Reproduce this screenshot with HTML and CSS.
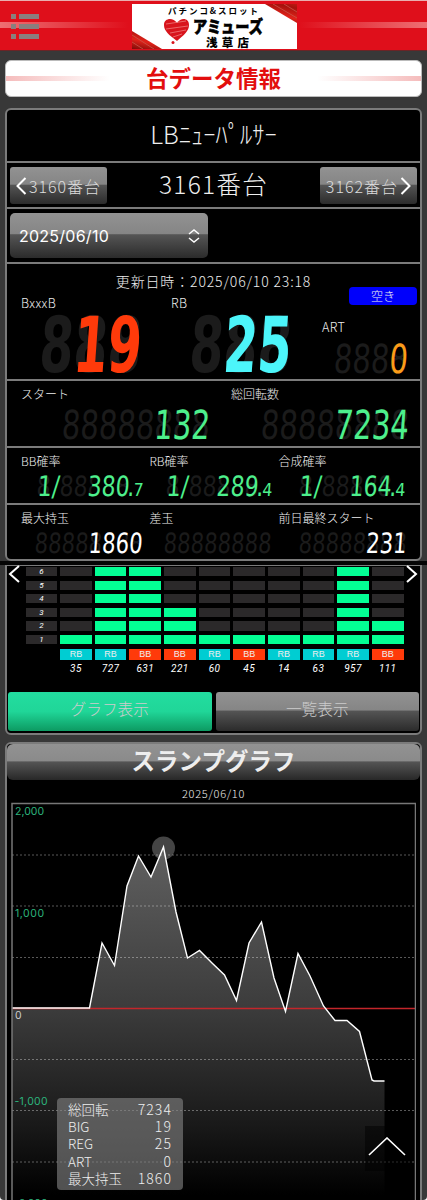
FILE: index.html
```html
<!DOCTYPE html>
<html lang="ja">
<head>
  <meta charset="UTF-8">
  <meta name="viewport" content="width=device-width, initial-scale=1.0">
  <title>台データ情報</title>
  <link rel="stylesheet" href="styles.css">
</head>
<body>
<div class="page">
  <header class="header">
    <div class="menu"><i></i><i></i><i></i></div>
    <svg class="logo" width="165" height="45" viewBox="0 0 165 45">
      <defs>
        <linearGradient id="ribbon" x1="0" y1="1" x2="0.35" y2="0" spreadMethod="reflect">
          <stop offset="0" stop-color="#7d0c08"/>
          <stop offset="0.5" stop-color="#e2231a"/>
          <stop offset="1" stop-color="#a5120c"/>
        </linearGradient>
      </defs>
      <rect width="165" height="45" fill="#fff"/>
      <path d="M0 27L30 45H0Z" fill="url(#ribbon)"/>
      <path d="M0 31L22 45M0 38L11 45" stroke="#c9574a" stroke-width="0.8"/>
      <path d="M133 0H165V19Z" fill="url(#ribbon)"/>
      <path d="M141 0L165 14M152 0L165 8" stroke="#c9574a" stroke-width="0.8"/>
      <path d="M45 37C37 31 32 27 32 21C32 14 41 13 45 19C49 13 57 14 57 21C57 27 52 31 45 37Z" fill="#d8141c"/>
      <path d="M34 20L54 17M34 25L56 22M38 29L54 26M41 33L50 30" stroke="#ef7b7b" stroke-width="0.8"/>
      <circle cx="41" cy="38.500" r="1.500" fill="#d8141c"/>
      <text class="logo-sub" x="36" y="9.500" textLength="90">パチンコ&amp;スロット</text>
      <text class="logo-name" x="61" y="29" textLength="70" lengthAdjust="spacingAndGlyphs">アミューズ</text>
      <text class="logo-shop" x="74" y="42.500" textLength="43">浅草店</text>
    </svg>
  </header>

  <h1 class="page-title">台データ情報</h1>

  <section class="panel machine">
    <h2 class="machine-name">LBﾆｭｰﾊﾟﾙｻｰ</h2>
    <div class="machine-nav">
      <a class="btn"><svg width="11" height="18" viewBox="0 0 11 18"><path d="M9.500 1L1.500 9L9.500 17"/></svg>3160番台</a>
      <strong>3161番台</strong>
      <a class="btn">3162番台<svg width="11" height="18" viewBox="0 0 11 18"><path d="M1.500 1L9.500 9L1.500 17"/></svg></a>
    </div>
    <div class="date-row">
      <div class="select">2025/06/10<svg width="12" height="14" viewBox="0 0 12 14"><path d="M1 5L6 1L11 5M1 9L6 13L11 9"/></svg></div>
    </div>

    <div class="counts">
      <p class="updated">更新日時：2025/06/10 23:18</p>
      <span class="badge">空き</span>
      <div class="count">
        <label>BxxxB</label>
        <svg class="led big" width="102" height="58"><text class="ghost" x="0" y="57" textLength="102" lengthAdjust="spacingAndGlyphs">888</text><text class="red" x="34" y="57" textLength="68" lengthAdjust="spacingAndGlyphs">19</text></svg>
      </div>
      <div class="count">
        <label>RB</label>
        <svg class="led big" width="102" height="58"><text class="ghost" x="0" y="57" textLength="102" lengthAdjust="spacingAndGlyphs">888</text><text class="cyan" x="34" y="57" textLength="68" lengthAdjust="spacingAndGlyphs">25</text></svg>
      </div>
      <div class="count art">
        <label>ART</label>
        <svg class="led mid" width="74" height="30"><text class="ghost" x="0" y="29" textLength="74" lengthAdjust="spacingAndGlyphs">8888</text><text class="orange" x="55.5" y="29" textLength="18.5" lengthAdjust="spacingAndGlyphs">0</text></svg>
      </div>
    </div>

    <div class="stats two">
      <div class="stat">
        <label>スタート</label>
        <svg class="led mid" width="148" height="30"><text class="ghost" x="0" y="29" textLength="148" lengthAdjust="spacingAndGlyphs">88888888</text><text class="green" x="92.5" y="29" textLength="55.5" lengthAdjust="spacingAndGlyphs">132</text></svg>
      </div>
      <div class="stat">
        <label>総回転数</label>
        <svg class="led mid" width="148" height="30"><text class="ghost" x="0" y="29" textLength="148" lengthAdjust="spacingAndGlyphs">88888888</text><text class="green" x="74" y="29" textLength="74" lengthAdjust="spacingAndGlyphs">7234</text></svg>
      </div>
    </div>

    <div class="stats three">
      <div class="stat">
        <label>BB確率</label>
        <svg class="led small" width="108" height="22"><text class="ghost" x="0" y="21" textLength="14" lengthAdjust="spacingAndGlyphs">8</text><text class="ghost" x="23" y="21" textLength="70" lengthAdjust="spacingAndGlyphs">88888</text><text class="green" x="1" y="21" textLength="22" lengthAdjust="spacingAndGlyphs">1/</text><text class="green" x="51" y="21" textLength="42" lengthAdjust="spacingAndGlyphs">380</text><text class="green" x="91" y="21" textLength="7" lengthAdjust="spacingAndGlyphs">.</text><text class="green tiny" x="97" y="21" textLength="10" lengthAdjust="spacingAndGlyphs">7</text></svg>
      </div>
      <div class="stat">
        <label>RB確率</label>
        <svg class="led small" width="108" height="22"><text class="ghost" x="0" y="21" textLength="14" lengthAdjust="spacingAndGlyphs">8</text><text class="ghost" x="23" y="21" textLength="70" lengthAdjust="spacingAndGlyphs">88888</text><text class="green" x="1" y="21" textLength="22" lengthAdjust="spacingAndGlyphs">1/</text><text class="green" x="51" y="21" textLength="42" lengthAdjust="spacingAndGlyphs">289</text><text class="green" x="91" y="21" textLength="7" lengthAdjust="spacingAndGlyphs">.</text><text class="green tiny" x="97" y="21" textLength="10" lengthAdjust="spacingAndGlyphs">4</text></svg>
      </div>
      <div class="stat">
        <label>合成確率</label>
        <svg class="led small" width="108" height="22"><text class="ghost" x="0" y="21" textLength="14" lengthAdjust="spacingAndGlyphs">8</text><text class="ghost" x="23" y="21" textLength="70" lengthAdjust="spacingAndGlyphs">88888</text><text class="green" x="1" y="21" textLength="22" lengthAdjust="spacingAndGlyphs">1/</text><text class="green" x="51" y="21" textLength="42" lengthAdjust="spacingAndGlyphs">164</text><text class="green" x="91" y="21" textLength="7" lengthAdjust="spacingAndGlyphs">.</text><text class="green tiny" x="97" y="21" textLength="10" lengthAdjust="spacingAndGlyphs">4</text></svg>
      </div>
    </div>

    <div class="stats three last">
      <div class="stat">
        <label>最大持玉</label>
        <svg class="led small" width="108" height="22"><text class="ghost" x="0" y="21" textLength="108" lengthAdjust="spacingAndGlyphs">88888888</text><text class="white" x="54" y="21" textLength="54" lengthAdjust="spacingAndGlyphs">1860</text></svg>
      </div>
      <div class="stat">
        <label>差玉</label>
        <svg class="led small" width="108" height="22"><text class="ghost" x="0" y="21" textLength="108" lengthAdjust="spacingAndGlyphs">88888888</text></svg>
      </div>
      <div class="stat">
        <label>前日最終スタート</label>
        <svg class="led small" width="108" height="22"><text class="ghost" x="0" y="21" textLength="108" lengthAdjust="spacingAndGlyphs">88888888</text><text class="white" x="67.500" y="21" textLength="40.5" lengthAdjust="spacingAndGlyphs">231</text></svg>
      </div>
    </div>
  </section>

  <div class="seam"></div>

  <section class="panel history">
    <div class="history-chart">
      <svg class="arrow" width="12" height="18" viewBox="0 0 12 18"><path d="M11 1L2 9L11 17"/></svg>
      <div class="bars" id="bars"></div>
      <svg class="arrow" width="12" height="18" viewBox="0 0 12 18"><path d="M1 1L10 9L1 17"/></svg>
    </div>
    <div class="tabs">
      <a class="tab active">グラフ表示</a>
      <a class="tab">一覧表示</a>
    </div>
  </section>

  <section class="panel slump">
    <h2 class="slump-title">スランプグラフ</h2>
    <p class="slump-date">2025/06/10</p>
    <div class="graph">
      <svg width="405" height="400" viewBox="11 802 405 400">
        <defs>
          <linearGradient id="area" gradientUnits="userSpaceOnUse" x1="0" y1="847" x2="0" y2="1195">
            <stop offset="0" stop-color="#606060"/>
            <stop offset="0.46" stop-color="#3c3c3c"/>
            <stop offset="0.8" stop-color="#191919"/>
            <stop offset="1" stop-color="#000"/>
          </linearGradient>
        </defs>
        <circle cx="163.500" cy="848" r="11.500" fill="#444"/>
        <path fill="url(#area)" d="M12 1008H89.500L102 943L114.500 965.500L127 886L138.500 856L151 877L163.500 847L176 912L187.500 958L199.500 950.500L212 963L224.500 975L236.500 1000.500L249 943L261.500 922L274 978L285.500 1011.500L298 953.500L310 976L323.500 1006L335 1020.500H347L359.500 1031.500L372 1080L374 1081H384.500V1200H12Z"/>
        <path class="grid-line" d="M12 855H415M12 906H415M12 957.500H415M12 1059.500H415M12 1110.500H415M12 1162H415"/>
        <path d="M12 1008.500H415" stroke="#c3262b" stroke-width="1.500"/>
        <path class="line" d="M12 1008H89.500L102 943L114.500 965.500L127 886L138.500 856L151 877L163.500 847L176 912L187.500 958L199.500 950.500L212 963L224.500 975L236.500 1000.500L249 943L261.500 922L274 978L285.500 1011.500L298 953.500L310 976L323.500 1006L335 1020.500H347L359.500 1031.500L372 1080L374 1081H384.500"/>
        <path d="M12 1202V803.500H415.500V1202" fill="none" stroke="#777" stroke-width="1.500"/>
        <text class="axis" x="15" y="814.500" textLength="29">2,000</text>
        <text class="axis" x="15" y="916.500" textLength="29">1,000</text>
        <text class="axis zero" x="15" y="1019">0</text>
        <text class="axis" x="14.500" y="1104.500" textLength="33">-1,000</text>
        <text class="axis" x="14.500" y="1206.500" textLength="33">-2,000</text>
      </svg>
      <dl class="summary">
        <dt>総回転</dt><dd>7234</dd>
        <dt>BIG</dt><dd>19</dd>
        <dt>REG</dt><dd>25</dd>
        <dt>ART</dt><dd>0</dd>
        <dt>最大持玉</dt><dd>1860</dd>
      </dl>
      <a class="to-top"><svg width="38" height="19" viewBox="0 0 38 19"><path d="M1 18L19 1L37 18"/></svg></a>
    </div>
  </section>
</div>
<script src="script.js"></script>
</body>
</html>
```

FILE: styles.css
```css
* {
  box-sizing: border-box;
}
html {
  background: #fff;
}
body {
  margin: 0;
  font-family: "Noto Sans CJK JP", sans-serif;
  color: #eee;
}
h1, h2, p, dl, dd {
  margin: 0;
}
.page {
  height: 1200px;
  overflow: hidden;
  background: #383838;
  border-radius: 0 0 4px 4px;
}
svg {
  display: block;
  flex: none;
}

/* header */
.header {
  position: relative;
  height: 51px;
  padding-top: 4px;
  border-top: 1px solid #e9aeb0;
  border-bottom: 1px solid #6b2426;
  background:
    linear-gradient(to right, #ee6f73, transparent 30%, transparent 70%, #ee6f73) 0 21px / 100% 6px no-repeat,
    #df0f1b;
  display: flex;
  justify-content: center;
  align-items: flex-start;
}
.logo {
  margin-top: -1px;
  margin-left: 2px;
}
.logo-sub {
  font-size: 8.5px;
  font-weight: 700;
}
.logo-name {
  font-size: 17px;
  font-weight: 900;
  stroke: #000;
  stroke-width: 0.6px;
}
.logo-shop {
  font-size: 11.5px;
  font-weight: 900;
}
.menu {
  position: absolute;
  left: 11px;
  top: 13px;
}
.menu i {
  display: block;
  width: 28px;
  height: 5px;
  margin-bottom: 5px;
  background: linear-gradient(to right, #8a7e7e 5px, transparent 5px, transparent 8px, #8a7e7e 8px);
}

.page-title {
  height: 37px;
  margin: 9px 5px 11px;
  border: 1px solid #bbb;
  border-radius: 6px;
  background:
    linear-gradient(to right, #f5bcbc, #fff 25%, #fff 75%, #f5bcbc) 0 15px / 100% 5px no-repeat,
    #fff;
  color: #e30e0e;
  font-size: 22.5px;
  font-weight: 700;
  line-height: 33px;
  text-align: center;
}

.panel {
  margin: 0 5px;
  border: 2px solid #7b7b7b;
  border-radius: 6px;
  background: #000;
}

/* machine */
.machine {
  height: 453px;
}
.machine-name {
  height: 51px;
  font-size: 24.5px;
  font-weight: 300;
  line-height: 47px;
  text-align: center;
}
.machine-nav {
  height: 48px;
  padding: 0 3px;
  border-top: 2px solid #7b7b7b;
  border-bottom: 2px solid #7b7b7b;
  display: flex;
  justify-content: space-between;
  align-items: center;
}
.machine-nav strong {
  font-size: 24.5px;
  font-weight: 300;
  line-height: 40px;
  letter-spacing: 1.3px;
  margin-top: -3px;
}
.btn {
  width: 97px;
  height: 37px;
  border-radius: 3px;
  background: linear-gradient(#929292, #858585 47%, #555 48%, #2b2b2b);
  color: #ddd;
  font-size: 16px;
  font-weight: 300;
  letter-spacing: 1px;
  display: flex;
  align-items: center;
  justify-content: center;
  gap: 2px;
  padding-top: 1px;
}
.btn path {
  fill: none;
  stroke: #fff;
  stroke-width: 2;
}
.date-row {
  height: 53px;
  padding: 4px 3px;
}
.select {
  width: 198px;
  height: 45px;
  padding: 0 8px 0 9px;
  border-radius: 5px;
  background: linear-gradient(#929292, #858585 47%, #555 48%, #2b2b2b);
  color: #fff;
  font-family: Inter, sans-serif;
  font-size: 16px;
  letter-spacing: 0.25px;
  display: flex;
  justify-content: space-between;
  align-items: center;
}
.select path {
  fill: none;
  stroke: #fff;
  stroke-width: 1.5;
}

label {
  font-size: 12px;
  line-height: 16px;
  font-weight: 300;
  display: block;
}
.counts {
  position: relative;
  height: 117px;
  border-top: 2px solid #7b7b7b;
  display: grid;
  grid-template-columns: 150px 150px 1fr;
  grid-template-rows: 31px 1fr;
}
.updated {
  grid-column: 1 / 4;
  font-size: 14px;
  font-weight: 300;
  line-height: 34px;
  letter-spacing: 0.85px;
  text-align: center;
}
.badge {
  position: absolute;
  right: 3px;
  top: 23px;
  width: 68px;
  height: 18px;
  border-radius: 4px;
  background: #0000fb;
  font-size: 12px;
  font-weight: 300;
  line-height: 17px;
  text-align: center;
}
.count {
  padding-left: 14px;
}
.count label {
  font-size: 12.5px;
  letter-spacing: 0.4px;
}
.count .led {
  margin: 4px 0 0 17px;
}
.count.art {
  padding: 24px 0 0 15px;
}
.count.art .led {
  margin: 9px 0 0 11px;
}

/* led digits, dim eights sit behind the lit value */
.led {
  font-family: "DejaVu Sans", sans-serif;
  overflow: visible;
  transform: skewX(-4deg);
  transform-origin: 0 100%;
}
.led .ghost {
  fill: #1b1b1b;
}
.big {
  font-size: 77px;
  font-weight: 700;
}
.mid {
  font-size: 40px;
}
.small {
  font-size: 28px;
}
.led .tiny {
  font-size: 18px;
}
.red { fill: #ff3a0a; }
.cyan { fill: #4cf5fa; }
.orange { fill: #fb9c18; }
.green { fill: #4df08c; }
.white { fill: #fff; }

.stats {
  border-top: 2px solid #7b7b7b;
  display: grid;
}
.two {
  height: 67px;
  grid-template-columns: 210px 1fr;
}
.three {
  height: 57px;
  grid-template-columns: 128.5px 129px 1fr;
}
.stat {
  padding: 5px 0 0 14px;
}
.two .led {
  margin: 8px 0 0 40px;
}
.two .stat + .stat .led {
  margin-left: 29px;
}
.three .led {
  margin: 6px 0 0 15px;
}
.three .stat + .stat + .stat .led {
  margin-left: 19px;
}
.last .led {
  margin-left: 13px;
}

.seam {
  height: 4px;
  background: #050505;
}

/* history */
.history {
  height: 170px;
  border-top-width: 1px;
  border-radius: 0 0 6px 6px;
}
.history-chart {
  height: 126px;
  padding: 1px 2px 0 1px;
  display: flex;
  justify-content: space-between;
}
.arrow path {
  fill: none;
  stroke: #fff;
  stroke-width: 2;
}
.arrow {
  margin-top: -2px;
}
.bars {
  width: 378px;
  margin-left: 5px;
  margin-right: 2px;
  display: grid;
  grid-template-columns: repeat(11, 1fr);
  column-gap: 3px;
}
.col {
  display: flex;
  flex-direction: column;
  gap: 4.3px;
  align-items: stretch;
}
.cell {
  height: 9.3px;
  background: #2b292a;
  font: italic 8px/9px Roboto, sans-serif;
  color: #fff;
  text-align: center;
}
.cell.on {
  background: #03ff94;
}
.tag {
  height: 11px;
  font: 9px/11px "Liberation Sans", sans-serif;
  text-align: center;
}
.tag.rb { background: #00cdd2; }
.tag.bb { background: #ff3a0a; }
.games {
  font: italic 10px/10px Roboto, sans-serif;
  letter-spacing: 0.4px;
  color: #fff;
  text-align: center;
}
.tabs {
  padding: 0 1px;
  display: grid;
  grid-template-columns: 1fr 1fr;
  gap: 4px;
}
.tab {
  height: 39px;
  border-radius: 3px;
  background: linear-gradient(#929292, #858585 47%, #555 48%, #2b2b2b);
  color: #ccc;
  font-size: 15.7px;
  font-weight: 300;
  line-height: 34px;
  text-align: center;
}
.tab.active {
  background: linear-gradient(#22dda0, #20d698 50%, #0d9a62);
}

/* slump graph */
.slump {
  height: 480px;
  margin-top: 7px;
}
.slump-title {
  height: 36px;
  border-radius: 6px;
  background: linear-gradient(#929292, #8a8a8a 48%, #555 49%, #282828);
  font-size: 23.5px;
  font-weight: 700;
  line-height: 32px;
  text-align: center;
}
.slump-date {
  height: 22px;
  font-size: 11px;
  font-weight: 300;
  line-height: 26px;
  letter-spacing: 0.75px;
  text-align: center;
}
.graph {
  position: relative;
  padding-left: 4px;
}
.grid-line {
  fill: none;
  stroke: #fff;
  stroke-opacity: 0.35;
  stroke-dasharray: 2 2;
}
.line {
  fill: none;
  stroke: #fff;
  stroke-width: 1.4;
}
.axis {
  font-family: Inter, sans-serif;
  font-size: 10.5px;
  fill: #2cb37c;
}
.axis.zero {
  fill: #ccc;
}
.summary {
  position: absolute;
  left: 50px;
  top: 296px;
  width: 126px;
  height: 92px;
  padding: 3px 11px;
  border-radius: 4px;
  background: rgba(130, 130, 130, 0.62);
  display: grid;
  grid-template-columns: auto auto;
  font-size: 13.5px;
  line-height: 17px;
  font-weight: 300;
}
.summary dd {
  text-align: right;
  font-size: 14px;
  letter-spacing: 1.1px;
}
.to-top {
  position: absolute;
  left: 358px;
  top: 324px;
  width: 45px;
  height: 45px;
  padding: 11px 3px;
  background: rgba(0, 0, 0, 0.5);
}
.to-top path {
  fill: none;
  stroke: #fff;
  stroke-width: 1.6;
}
```

FILE: script.js
```js
const history = [
  { type: 'RB', games: 35, level: 1 },
  { type: 'RB', games: 727, level: 6 },
  { type: 'BB', games: 631, level: 6 },
  { type: 'BB', games: 221, level: 3 },
  { type: 'RB', games: 60, level: 1 },
  { type: 'BB', games: 45, level: 1 },
  { type: 'RB', games: 14, level: 1 },
  { type: 'RB', games: 63, level: 1 },
  { type: 'RB', games: 957, level: 6 },
  { type: 'BB', games: 111, level: 2 }
];

function drawBars(rows) {
  let html = '<div class="col">';
  for (let n = 6; n > 0; n--) {
    html += `<div class="cell">${n}</div>`;
  }
  html += '</div>';

  rows.forEach(row => {
    html += '<div class="col">';
    for (let n = 6; n > 0; n--) {
      html += `<div class="cell ${n <= row.level ? 'on' : ''}"></div>`;
    }
    html += `<div class="tag ${row.type.toLowerCase()}">${row.type}</div>`;
    html += `<div class="games">${row.games}</div></div>`;
  });
  document.getElementById('bars').innerHTML = html;
}
drawBars(history);
```
